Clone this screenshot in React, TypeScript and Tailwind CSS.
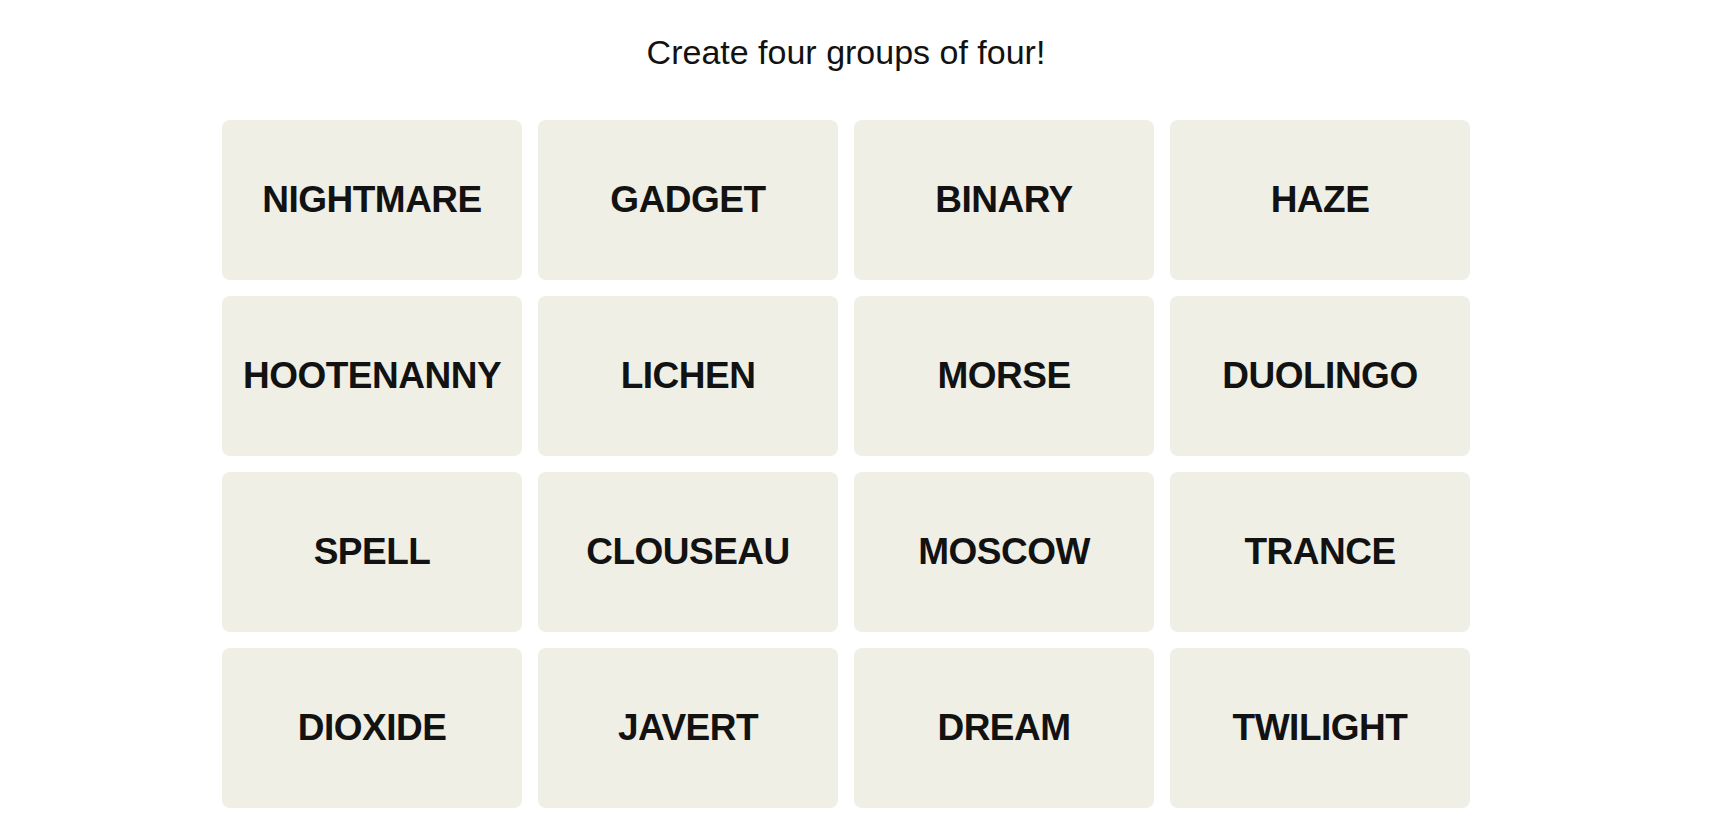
const words = [
  'NIGHTMARE', 'GADGET', 'BINARY', 'HAZE',
  'HOOTENANNY', 'LICHEN', 'MORSE', 'DUOLINGO',
  'SPELL', 'CLOUSEAU', 'MOSCOW', 'TRANCE',
  'DIOXIDE', 'JAVERT', 'DREAM', 'TWILIGHT',
]

export default function App() {
  return (
    <div className="min-h-[840px] w-full bg-white pr-[22px] font-['Liberation_Sans',Arial,sans-serif] text-[#121212]">
      <div className="flex flex-col items-center pt-[34px]">
        <h2 className="text-[34px] leading-[36px] font-normal">Create four groups of four!</h2>

        <div className="mt-[50px] grid grid-cols-[repeat(4,300px)] gap-4">
          {words.map((w) => (
            <button
              key={w}
              type="button"
              className="flex h-[160px] items-center justify-center rounded-[8px] bg-[#efefe6] text-[37px] font-bold tracking-[-0.5px] text-[#121212]"
            >
              {w}
            </button>
          ))}
        </div>
      </div>
    </div>
  )
}
